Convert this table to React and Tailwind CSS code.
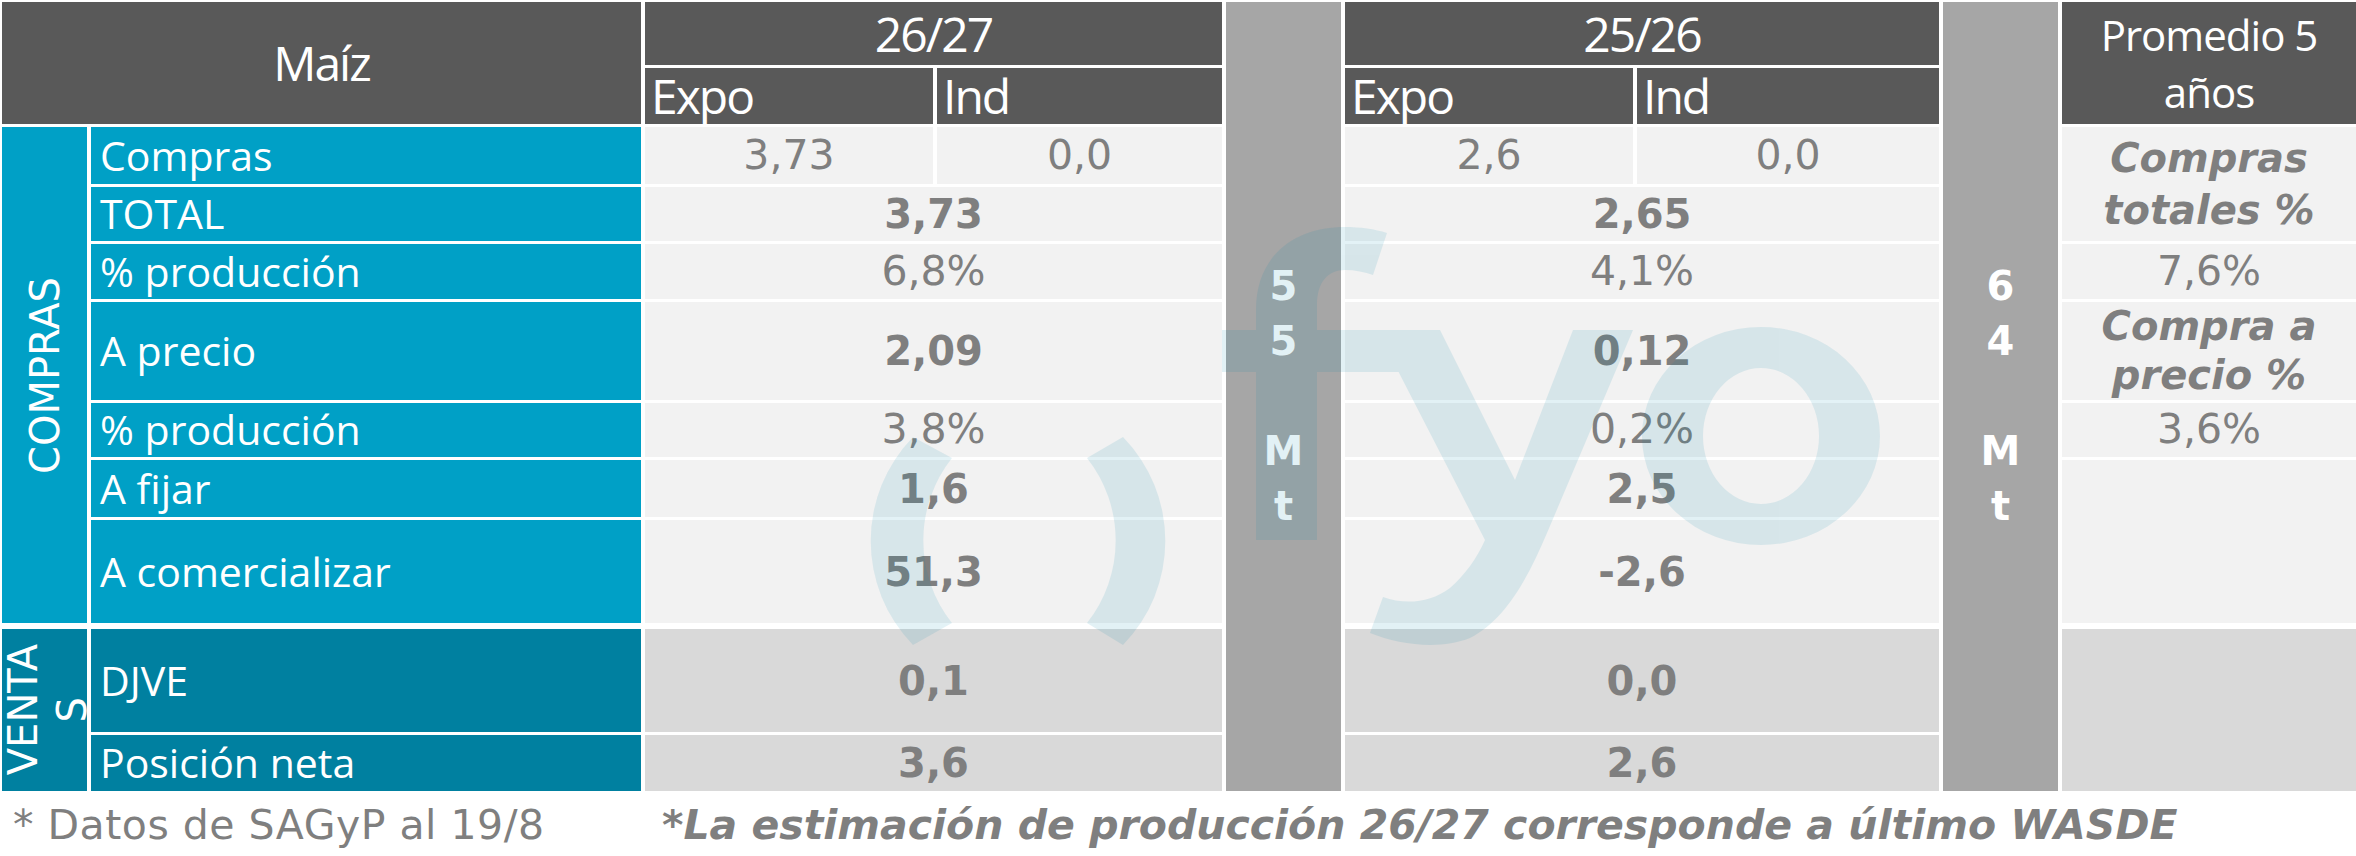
const NUM = "font-['DejaVu_Sans',sans-serif] text-[#7f7f7f]";
const SANS = "font-['Open_Sans',sans-serif]";
const SIDE = "font-['DejaVu_Sans',sans-serif] text-[40px] text-white";

const compras = [
  { row: 'row-start-3', label: 'Compras', cells: [['col-start-3', '3,73'], ['col-start-4', '0,0'], ['col-start-6', '2,6'], ['col-start-7', '0,0']] },
  { row: 'row-start-4', label: 'TOTAL', bold: true, cells: [['col-start-3 col-span-2', '3,73'], ['col-start-6 col-span-2', '2,65']] },
  { row: 'row-start-5', label: '% producción', cells: [['col-start-3 col-span-2', '6,8%'], ['col-start-6 col-span-2', '4,1%']] },
  { row: 'row-start-6', label: 'A precio', bold: true, cells: [['col-start-3 col-span-2', '2,09'], ['col-start-6 col-span-2', '0,12']] },
  { row: 'row-start-7', label: '% producción', cells: [['col-start-3 col-span-2', '3,8%'], ['col-start-6 col-span-2', '0,2%']] },
  { row: 'row-start-8', label: 'A fijar', bold: true, cells: [['col-start-3 col-span-2', '1,6'], ['col-start-6 col-span-2', '2,5']] },
  { row: 'row-start-9', label: 'A comercializar', bold: true, cells: [['col-start-3 col-span-2', '51,3'], ['col-start-6 col-span-2', '-2,6']] },
];

const ventas = [
  { row: 'row-start-11', label: 'DJVE', cells: [['col-start-3 col-span-2', '0,1'], ['col-start-6 col-span-2', '0,0']] },
  { row: 'row-start-12', label: 'Posición neta', cells: [['col-start-3 col-span-2', '3,6'], ['col-start-6 col-span-2', '2,6']] },
];

function Bar({ col, lines }) {
  return (
    <div className={`${col} row-span-full flex flex-col items-center justify-center bg-[#a6a6a6] font-['DejaVu_Sans',sans-serif] text-[40px] font-bold leading-[55px] text-white`}>
      {lines.map((c, i) => (
        <span key={i}>{c}</span>
      ))}
    </div>
  );
}

function Watermark() {
  return (
    <svg className="pointer-events-none absolute left-0 top-0" width="2356" height="856" viewBox="0 0 2356 856">
      <g fill="rgb(0,133,169)" opacity="0.11">
        {/* broken ring */}
        <path d="M913 437 A149 149 0 0 0 913 645 L952 623 A133 133 0 0 1 952 458 Z" />
        <path d="M1123 437 A149 149 0 0 1 1123 645 L1087 623 A133 133 0 0 0 1087 458 Z" />
        {/* f */}
        <path d="M1256 540 L1256 310 C1256 255 1295 227 1345 227 C1360 227 1375 229 1387 233 L1373 275 C1365 272 1355 270 1345 270 C1328 270 1317 282 1317 305 L1317 540 Z" />
        <rect x="1222" y="330" width="178" height="42" />
        {/* y */}
        <path d="M1377 330 L1440 330 L1515 480 L1573 330 L1633 330 L1547 533 C1527 580 1505 620 1470 638 C1440 650 1400 645 1370 633 L1383 597 C1405 605 1430 603 1450 588 C1465 575 1477 558 1485 540 Z" />
        {/* o */}
        <path
          fillRule="evenodd"
          d="M1642 436 a119 109 0 1 0 238 0 a119 109 0 1 0 -238 0 Z M1703 436 a58 68 0 1 0 116 0 a58 68 0 1 0 -116 0 Z"
        />
      </g>
    </svg>
  );
}

export default function App() {
  return (
    <div className="relative h-[856px] w-[2356px] overflow-hidden bg-white">
      <div className="pl-[2px] pt-[2px]">
        <div className="grid grid-cols-[85px_550px_288px_285px_115px_288px_302px_115px_294px] grid-rows-[63px_56px_57px_54px_55px_98px_54px_57px_103px_0px_103px_56px] gap-x-[4px] gap-y-[3px]">
          {/* Header */}
          <div className={`col-start-1 col-span-2 row-start-1 row-span-2 flex items-center justify-center bg-[#595959] ${SANS} text-[48px] tracking-[-2px] text-white`}>
            Maíz
          </div>
          <div className={`col-start-3 col-span-2 row-start-1 flex items-center justify-center bg-[#595959] ${SANS} text-[48px] tracking-[-2px] text-white`}>
            26/27
          </div>
          <div className={`col-start-3 row-start-2 flex items-center bg-[#595959] pl-[6px] ${SANS} text-[48px] tracking-[-2px] text-white`}>
            Expo
          </div>
          <div className={`col-start-4 row-start-2 flex items-center bg-[#595959] pl-[6px] ${SANS} text-[48px] tracking-[-2px] text-white`}>
            Ind
          </div>
          <Bar col="col-start-5" lines={['5', '5', '\u00a0', 'M', 't']} />
          <div className={`col-start-6 col-span-2 row-start-1 flex items-center justify-center bg-[#595959] ${SANS} text-[48px] tracking-[-2px] text-white`}>
            25/26
          </div>
          <div className={`col-start-6 row-start-2 flex items-center bg-[#595959] pl-[6px] ${SANS} text-[48px] tracking-[-2px] text-white`}>
            Expo
          </div>
          <div className={`col-start-7 row-start-2 flex items-center bg-[#595959] pl-[6px] ${SANS} text-[48px] tracking-[-2px] text-white`}>
            Ind
          </div>
          <Bar col="col-start-8" lines={['6', '4', '\u00a0', 'M', 't']} />
          <div className={`col-start-9 row-start-1 row-span-2 flex items-center justify-center bg-[#595959] text-center ${SANS} text-[42px] leading-[57px] tracking-[-1px] text-white`}>
            <span>
              Promedio 5
              <br />
              años
            </span>
          </div>

          {/* Compras */}
          <div className={`col-start-1 row-start-3 row-span-7 flex items-center justify-center bg-[#00a0c6] ${SIDE}`}>
            <span className="rotate-180 [writing-mode:vertical-rl]">COMPRAS</span>
          </div>
          {compras.map((r, i) => (
            <div key={'l' + i} className={`${r.row} col-start-2 flex items-center bg-[#00a0c6] pl-[9px] ${SANS} text-[41px] text-white`}>
              {r.label}
            </div>
          ))}
          {compras.map((r) =>
            r.cells.map(([col, v], j) => (
              <div
                key={r.row + j}
                className={`${r.row} ${col} flex items-center justify-center bg-[#f2f2f2] ${NUM} ${r.bold ? 'text-[40px] font-bold' : 'text-[41px]'}`}
              >
                {v}
              </div>
            ))
          )}

          {/* Promedio column */}
          <div className={`col-start-9 row-start-3 row-span-2 flex items-center justify-center bg-[#f2f2f2] text-center ${NUM} text-[40px] font-bold italic leading-[52px]`}>
            <span>
              Compras
              <br />
              totales %
            </span>
          </div>
          <div className={`col-start-9 row-start-5 flex items-center justify-center bg-[#f2f2f2] ${NUM} text-[41px]`}>7,6%</div>
          <div className={`col-start-9 row-start-6 flex items-center justify-center bg-[#f2f2f2] text-center ${NUM} text-[40px] font-bold italic leading-[49px]`}>
            <span>
              Compra a
              <br />
              precio %
            </span>
          </div>
          <div className={`col-start-9 row-start-7 flex items-center justify-center bg-[#f2f2f2] ${NUM} text-[41px]`}>3,6%</div>
          <div className="col-start-9 row-start-8 row-span-2 bg-[#f2f2f2]" />

          {/* Ventas: label wraps as VENTA / S */}
          <div className={`col-start-1 row-start-11 row-span-2 flex items-center gap-[3px] bg-[#0080a0] ${SIDE} leading-[46px]`}>
            <span className="-ml-[2px] rotate-180 [writing-mode:vertical-rl]">VENTA</span>
            <span className="rotate-180 [writing-mode:vertical-rl]">S</span>
          </div>
          {ventas.map((r, i) => (
            <div key={'v' + i} className={`${r.row} col-start-2 flex items-center bg-[#0080a0] pl-[9px] ${SANS} text-[41px] text-white`}>
              {r.label}
            </div>
          ))}
          {ventas.map((r) =>
            r.cells.map(([col, v], j) => (
              <div key={r.row + j} className={`${r.row} ${col} flex items-center justify-center bg-[#d9d9d9] ${NUM} text-[40px] font-bold`}>
                {v}
              </div>
            ))
          )}
          <div className="col-start-9 row-start-11 row-span-2 bg-[#d9d9d9]" />
        </div>

        {/* Footnotes */}
        <div className={`mt-[14px] flex ${NUM} text-[41px] leading-none`}>
          <div className="w-[660px] shrink-0 pl-[11px] tracking-[0.5px]">* Datos de SAGyP al 19/8</div>
          <div className="font-bold italic">*La estimación de producción 26/27 corresponde a último WASDE</div>
        </div>
      </div>
      <Watermark />
    </div>
  );
}
